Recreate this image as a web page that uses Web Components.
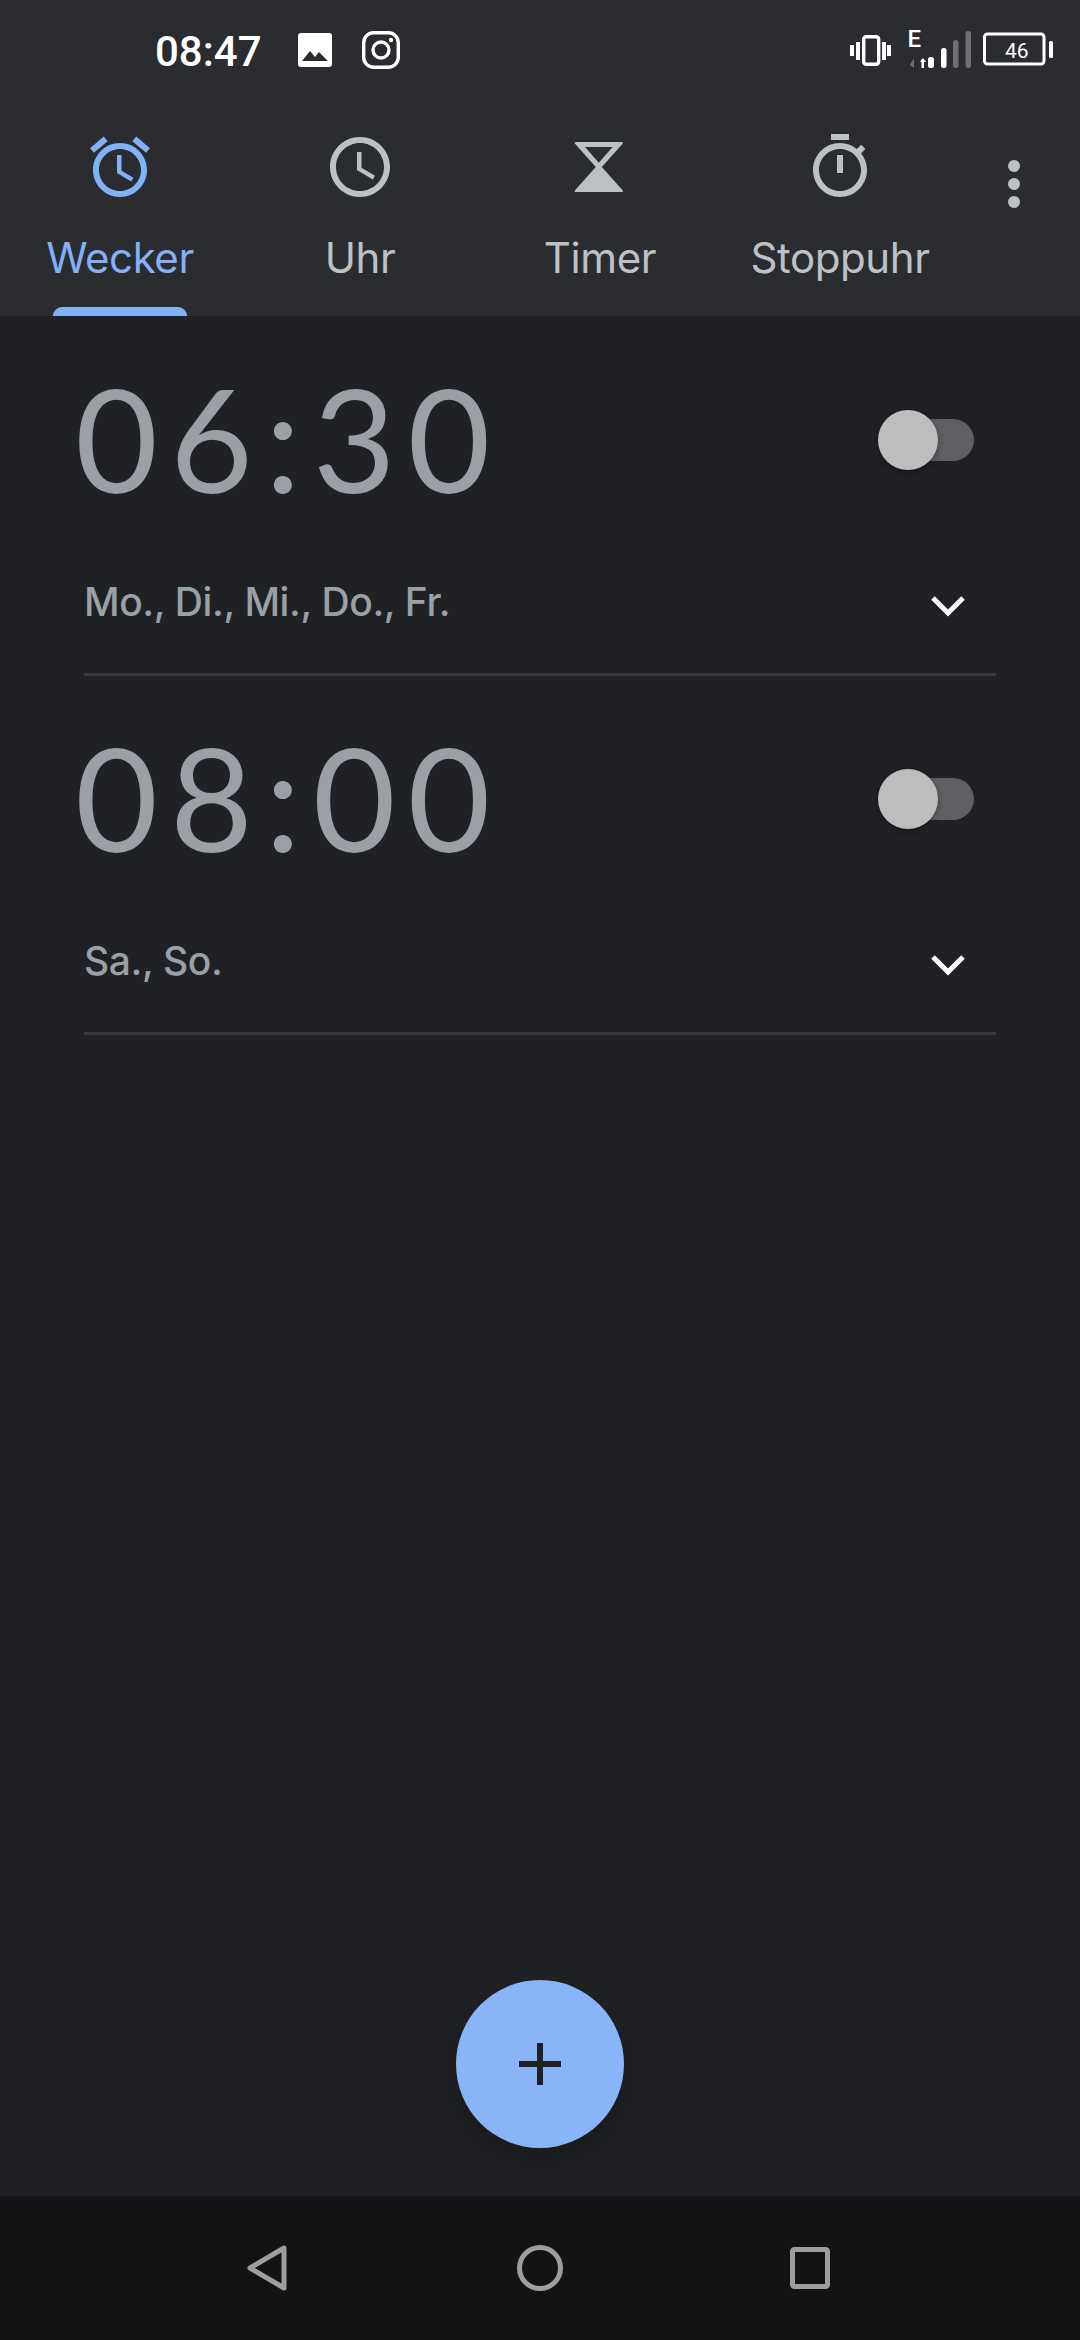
<!DOCTYPE html>
<html lang="de">
<head>
<meta charset="utf-8">
<title>Wecker</title>
<style>
  html, body { margin: 0; padding: 0; background: #202124; }
  body { width: 1080px; height: 2340px; font-family: "Inter", "Liberation Sans", sans-serif; }
  x-clock-app { width: 1080px; height: 2340px; }
</style>
</head>
<body>
<x-clock-app>
  <x-status-bar slot="top"></x-status-bar>
  <x-tab-bar slot="top">
    <x-tab icon="alarm" active>Wecker</x-tab>
    <x-tab icon="clock">Uhr</x-tab>
    <x-tab icon="timer">Timer</x-tab>
    <x-tab icon="stopwatch">Stoppuhr</x-tab>
  </x-tab-bar>
  <x-alarm-row time="06:30">Mo., Di., Mi., Do., Fr.</x-alarm-row>
  <x-alarm-row time="08:00">Sa., So.</x-alarm-row>
  <x-fab slot="over"></x-fab>
  <x-nav-bar slot="bottom"></x-nav-bar>
</x-clock-app>

<script>
// icon paths, 24 unit material grid unless said otherwise
const ICONS = {
  alarm: 'M22 5.72l-4.6-3.86-1.29 1.53 4.6 3.86L22 5.72zM7.88 3.39L6.6 1.86 2 5.71l1.29 1.53 4.59-3.85zM12.5 8H11v6l4.75 2.85.75-1.23-4-2.37V8zM12 4c-4.97 0-9 4.03-9 9s4.02 9 9 9c4.97 0 9-4.03 9-9s-4.03-9-9-9zm0 16c-3.87 0-7-3.13-7-7s3.13-7 7-7 7 3.13 7 7-3.13 7-7 7z',
  clock: 'M11.99 2C6.47 2 2 6.48 2 12s4.47 10 9.99 10C17.52 22 22 17.52 22 12S17.52 2 11.99 2zM12 20c-4.42 0-8-3.58-8-8s3.58-8 8-8 8 3.58 8 8-3.58 8-8 8zm.5-13H11v6l5.25 3.15.75-1.23-4.5-2.67z',
  timer: 'M3.9 3.7h15.4c.3 0 .4.3.3.5L12.6 12l7 7.8c.2.3 0 .5-.3.5H3.9c-.3 0-.5-.2-.3-.5L10.6 12 3.6 4.2c-.1-.2 0-.5.3-.5zM7 5.3l4.6 5.3 4.6-5.3z',
  stopwatch: 'M15 1H9v2h6V1zm-4 13h2V8h-2v6zm8.03-6.61l1.42-1.42c-.43-.51-.9-.99-1.41-1.41l-1.42 1.42C16.07 4.74 14.12 4 12 4c-4.97 0-9 4.03-9 9s4.02 9 9 9 9-4.03 9-9c0-2.12-.74-4.07-1.97-5.61zM12 20c-3.87 0-7-3.13-7-7s3.13-7 7-7 7 3.13 7 7-3.13 7-7 7z'
};

class XClockApp extends HTMLElement {
  constructor() {
    super();
    this.attachShadow({ mode: 'open' });
    this.shadowRoot.innerHTML = `
      <style>
        :host { display: flex; flex-direction: column; position: relative; background: #202124; overflow: hidden; }
        main { flex: 1; display: flex; flex-direction: column; }
      </style>
      <slot name="top"></slot>
      <main><slot></slot></main>
      <slot name="over"></slot>
      <slot name="bottom"></slot>
    `;
  }
}

class XStatusBar extends HTMLElement {
  constructor() {
    super();
    this.attachShadow({ mode: 'open' });
    this.shadowRoot.innerHTML = `
      <style>
        :host { display: flex; height: 131px; background: #2b2c30; box-sizing: border-box; padding: 31px 27px 0 155px; align-items: flex-start; color: #fff; }
        .time { font: 500 42px/42px "Roboto", sans-serif; width: 143px; height: 42px; }
        svg { display: block; flex: none; }
        .img { margin-top: 2px; }
        .ig { margin-left: 30px; }
        .right { margin-left: auto; margin-top: -11px; }
        text { font-family: "Roboto", sans-serif; fill: #fff; }
      </style>
      <span class="time">08:47</span>
      <svg class="img" width="34" height="34" viewBox="0 0 34 34">
        <rect width="34" height="34" rx="3" fill="#fff"/>
        <path d="M4 28l8-10 5 6 4-5 9 9z" fill="#2b2c30"/>
      </svg>
      <svg class="ig" width="38" height="38" viewBox="0 0 38 38" fill="none" stroke="#fff" stroke-width="3.4">
        <rect x="1.7" y="1.7" width="34.6" height="34.6" rx="10"/>
        <circle cx="19" cy="19" r="8"/>
        <circle cx="29" cy="9" r="2.2" fill="#fff" stroke="none"/>
      </svg>
      <svg class="right" width="203" height="60" viewBox="850 20 203 60">
        <g fill="#fff">
          <rect x="850" y="45" width="4" height="11"/>
          <rect x="856" y="42" width="4" height="18"/>
          <rect x="882" y="42" width="4" height="18"/>
          <rect x="887" y="45" width="4" height="11"/>
          <text x="907.5" y="47" font-size="24" font-weight="500">E</text>
          <rect x="921.5" y="59" width="2.5" height="9" />
          <rect x="928" y="57" width="6" height="11" rx="2.5"/>
          <rect x="941" y="48" width="5.5" height="20" rx="2.5"/>
        </g>
        <rect x="863.7" y="36.7" width="15" height="27.6" rx="2.5" fill="none" stroke="#fff" stroke-width="3.4"/>
        <path d="M914 58v10l-4-3z" fill="#6f7072"/>
        <path d="M920 62l3-4 3 4z" fill="#fff"/>
        <rect x="953" y="40" width="5.5" height="28" rx="2.5" fill="#6f7072"/>
        <rect x="965.5" y="31" width="5.5" height="37" rx="2.5" fill="#6f7072"/>
        <rect x="984.5" y="34" width="59.5" height="30" rx="3" fill="none" stroke="#fff" stroke-width="3"/>
        <rect x="1049" y="41" width="4" height="17" rx="1.5" fill="#fff"/>
        <text x="1005" y="57.5" font-size="21">46</text>
      </svg>
    `;
  }
}

class XTabBar extends HTMLElement {
  constructor() {
    super();
    this.attachShadow({ mode: 'open' });
    this.shadowRoot.innerHTML = `
      <style>
        :host { display: flex; height: 185px; background: #2b2c30; }
        .tabs { display: grid; grid-template-columns: repeat(4, 240px); }
        svg { display: block; margin: 17px 0 0 18px; fill: #bdc1c6; }
      </style>
      <div class="tabs"><slot></slot></div>
      <svg width="72" height="72" viewBox="0 0 24 24">
        <circle cx="12" cy="6" r="2"/><circle cx="12" cy="12" r="2"/><circle cx="12" cy="18" r="2"/>
      </svg>
    `;
  }
}

class XTab extends HTMLElement {
  connectedCallback() {
    const active = this.hasAttribute('active');
    this.attachShadow({ mode: 'open' });
    this.shadowRoot.innerHTML = `
      <style>
        :host { display: flex; flex-direction: column; align-items: center; color: ${active ? '#82b1f8' : '#bdc1c6'}; }
        svg { display: block; fill: currentColor; flex: none; }
        .label { font: 400 42px/46px "Inter", sans-serif; margin-top: 32px; letter-spacing: -0.4px; white-space: nowrap; }
        .bar { margin-top: auto; width: 134px; height: 9px; border-radius: 9px 9px 0 0; background: #82b1f8; }
      </style>
      <svg width="72" height="72" viewBox="0 0 24 24"><path fill-rule="evenodd" d="${ICONS[this.getAttribute('icon')]}"/></svg>
      <span class="label"><slot></slot></span>
      ${active ? '<div class="bar"></div>' : ''}
    `;
  }
}

class XSwitch extends HTMLElement {
  constructor() {
    super();
    this.attachShadow({ mode: 'open' });
    this.shadowRoot.innerHTML = `
      <style>
        :host { display: block; position: relative; width: 96px; height: 60px; }
        .track { position: absolute; left: 20px; right: 0; top: 9px; height: 42px; border-radius: 21px; background: #5f6063; }
        .knob { position: absolute; left: 0; top: 0; width: 60px; height: 60px; border-radius: 50%; background: #bdbdbd; box-shadow: 0 2px 6px rgba(0,0,0,.35); }
      </style>
      <div class="track"></div>
      <div class="knob"></div>
    `;
  }
}

class XAlarmRow extends HTMLElement {
  connectedCallback() {
    this.attachShadow({ mode: 'open' });
    this.shadowRoot.innerHTML = `
      <style>
        :host { display: block; height: 359px; box-sizing: border-box; padding: 1px 84px 0; color: #9aa0a6; }
        .top { display: flex; align-items: center; justify-content: space-between; height: 246px; }
        .time { font: 400 143px/1 "Lato", sans-serif; margin: 0 0 5px -9px; letter-spacing: 12px; }
        x-switch { margin-right: 22px; }
        .days { display: flex; align-items: center; justify-content: space-between; height: 48px; margin-top: 15px; }
        .label { font: 500 39px/48px "Inter", sans-serif; letter-spacing: -0.4px; }
        svg { display: block; margin: 7px 31px 0 0; }
        .rule { height: 3px; background: #37383c; margin-top: 47px; }
      </style>
      <div class="top">
        <span class="time">${this.getAttribute('time')}</span>
        <x-switch></x-switch>
      </div>
      <div class="days">
        <span class="label"><slot></slot></span>
        <svg width="34" height="22" viewBox="0 0 34 22" fill="none" stroke="#fff" stroke-width="5"><path d="M2 3l15 15L32 3"/></svg>
      </div>
      <div class="rule"></div>
    `;
  }
}

class XFab extends HTMLElement {
  constructor() {
    super();
    this.attachShadow({ mode: 'open' });
    this.shadowRoot.innerHTML = `
      <style>
        :host { display: flex; align-items: center; justify-content: center; position: absolute; left: 456px; top: 1980px; width: 168px; height: 168px; border-radius: 50%; background: #8ab4f8; box-shadow: 0 10px 24px rgba(0,0,0,.22); }
        svg { display: block; }
      </style>
      <svg width="42" height="42" viewBox="0 0 42 42" fill="#202124"><rect x="18" width="6" height="42"/><rect y="18" width="42" height="6"/></svg>
    `;
  }
}

class XNavBar extends HTMLElement {
  constructor() {
    super();
    this.attachShadow({ mode: 'open' });
    this.shadowRoot.innerHTML = `
      <style>
        :host { display: flex; align-items: center; justify-content: center; height: 144px; background: #121315; padding-right: 3px; }
        svg { display: block; fill: none; stroke: #9e9e9e; stroke-width: 5; stroke-linejoin: round; }
        .back { margin-right: 230px; }
        .square { margin-left: 227px; }
      </style>
      <svg class="back" width="40" height="46" viewBox="0 0 40 46"><path d="M37 3v40L3 23z"/></svg>
      <svg width="46" height="46" viewBox="0 0 46 46"><circle cx="23" cy="23" r="20.5"/></svg>
      <svg class="square" width="40" height="42" viewBox="0 0 40 42"><rect x="2.5" y="2.5" width="35" height="37" rx="2"/></svg>
    `;
  }
}

customElements.define('x-clock-app', XClockApp);
customElements.define('x-status-bar', XStatusBar);
customElements.define('x-tab-bar', XTabBar);
customElements.define('x-tab', XTab);
customElements.define('x-switch', XSwitch);
customElements.define('x-alarm-row', XAlarmRow);
customElements.define('x-fab', XFab);
customElements.define('x-nav-bar', XNavBar);
</script>
</body>
</html>
